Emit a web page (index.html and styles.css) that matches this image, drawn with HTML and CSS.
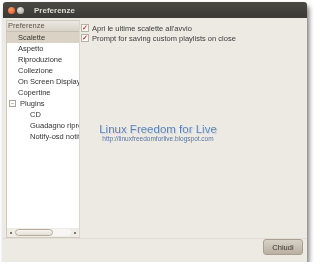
FILE: index.html
```html
<!DOCTYPE html>
<html lang="it">
<head>
  <meta charset="UTF-8" />
  <title>Preferenze</title>
  <link rel="stylesheet" href="styles.css">
</head>
<body>
  <div class="window">
    <div class="titlebar">
      <span class="btn close"></span>
      <span class="btn min"></span>
      <span class="title">Preferenze</span>
    </div>
    <div class="content">
      <div class="main">
        <div class="sidebar">
          <div class="tree">
            <div class="head">Preferenze</div>
            <div class="row sel">Scalette</div>
            <div class="row">Aspetto</div>
            <div class="row">Riproduzione</div>
            <div class="row">Collezione</div>
            <div class="row">On Screen Display</div>
            <div class="row">Copertine</div>
            <div class="row"><span class="exp">−</span>Plugins</div>
            <div class="row sub">CD</div>
            <div class="row sub">Guadagno riproduzione</div>
            <div class="row sub">Notify-osd notifiche</div>
          </div>
          <div class="scroll">
            <span class="dot"></span>
            <span class="track"><span class="thumb"></span></span>
            <span class="dot"></span>
          </div>
        </div>
        <div class="panel">
          <label class="check"><span class="box">✓</span>Apri le ultime scalette all'avvio</label>
          <label class="check"><span class="box">✓</span>Prompt for saving custom playlists on close</label>
          <div class="mark">
            <div class="mark-title">Linux Freedom for Live</div>
            <div class="mark-url">http://linuxfreedomforlive.blogspot.com</div>
          </div>
        </div>
      </div>
      <div class="footer">
        <button class="close-btn">Chiudi</button>
      </div>
    </div>
  </div>
</body>
</html>
```

FILE: styles.css
```css
body {
  margin: 0;
  background: #ffffff;
  font-family: "Liberation Sans", Arial, sans-serif;
  font-size: 7.5px;
  color: #3c3c3c;
}
.window {
  margin: 2px 0 0 3px;
  width: 304px;
  height: 260px;
  display: flex;
  flex-direction: column;
  box-shadow: 2px 4px 5px rgba(0, 0, 0, 0.55);
  border-radius: 3px 3px 0 0;
  overflow: hidden;
  will-change: transform;
}
.titlebar {
  height: 16px;
  flex: none;
  background: linear-gradient(#4a4944, #3a3935);
  display: flex;
  align-items: center;
  padding-left: 5px;
  gap: 2px;
}
.btn {
  width: 7px;
  height: 7px;
  border-radius: 50%;
}
.btn.close {
  background: radial-gradient(circle at 40% 35%, #f59a6b, #e0541e);
}
.btn.min {
  background: radial-gradient(circle at 40% 35%, #e6e4df, #9d9a93);
}
.title {
  margin-left: 8px;
  color: #dfdbd2;
  font-weight: bold;
  font-size: 8px;
}
.content {
  flex: 1;
  background: #edeae4;
  display: flex;
  flex-direction: column;
}
.main {
  flex: 1;
  display: flex;
  padding: 2px 0 0 3px;
}
.sidebar {
  width: 72px;
  height: 216px;
  border: 1px solid #cfc9bf;
  border-right-color: #dcd7ce;
  display: flex;
  flex-direction: column;
  background: #efece6;
}
.tree {
  flex: 1;
  background: #ffffff;
  overflow: hidden;
  white-space: nowrap;
  color: #333333;
}
.head {
  height: 10px;
  line-height: 10px;
  padding-left: 1px;
  background: linear-gradient(#ece8e1, #d8d2c8);
  border-bottom: 1px solid #c6bfb3;
  color: #5c5648;
}
.row {
  height: 11px;
  line-height: 11px;
  padding-left: 11px;
}
.row.sel {
  background: #d9d2c5;
  color: #3a3630;
}
.row.sub {
  padding-left: 23px;
}
.exp {
  display: inline-block;
  width: 5px;
  height: 5px;
  line-height: 4px;
  font-size: 6px;
  text-align: center;
  border: 1px solid #aaa59a;
  color: #6a655b;
  margin-left: -9px;
  margin-right: 4px;
  vertical-align: 1px;
}
.scroll {
  height: 9px;
  display: flex;
  align-items: center;
  padding: 0 3px;
  gap: 3px;
}
.dot {
  width: 2px;
  height: 2px;
  background: #7d786f;
}
.track {
  flex: 1;
  height: 7px;
  border-radius: 4px;
  background: #f7f5f2;
  display: flex;
}
.thumb {
  width: 36px;
  height: 5px;
  border: 1px solid #b4ab9e;
  border-radius: 4px;
  background: linear-gradient(#f6f4f0, #e4dfd6);
}
.panel {
  flex: 1;
  padding: 3px 0 0 1px;
  display: flex;
  flex-direction: column;
}
.check {
  display: flex;
  align-items: center;
  height: 10px;
  gap: 3px;
}
.box {
  width: 6px;
  height: 6px;
  border: 1px solid #b9b1a5;
  background: #fbfaf8;
  color: #d0402a;
  font-size: 7px;
  font-weight: bold;
  line-height: 6px;
  text-align: center;
}
.mark {
  margin-top: 80px;
  margin-left: 14px;
  width: 126px;
  text-align: center;
}
.mark-title {
  font-size: 11.5px;
  line-height: 12px;
  color: #5b82b5;
  text-shadow: 0 0 2px #ffffff, 1px 1px 1px #b9c3cf;
}
.mark-url {
  font-size: 6.5px;
  line-height: 8px;
  color: #4f6d94;
  text-shadow: 0 0 1px #ffffff;
}
.footer {
  height: 24px;
  flex: none;
  display: flex;
  justify-content: flex-end;
  align-items: flex-start;
  padding-right: 4px;
  border-top: 1px solid #e2ded6;
}
.close-btn {
  width: 40px;
  height: 16px;
  border: 1px solid #a89f90;
  border-radius: 3px;
  background: linear-gradient(#d8d1c6, #b9b0a2);
  font-family: "Liberation Sans", Arial, sans-serif;
  font-size: 7.5px;
  color: #3a362f;
  padding: 0;
}
```
